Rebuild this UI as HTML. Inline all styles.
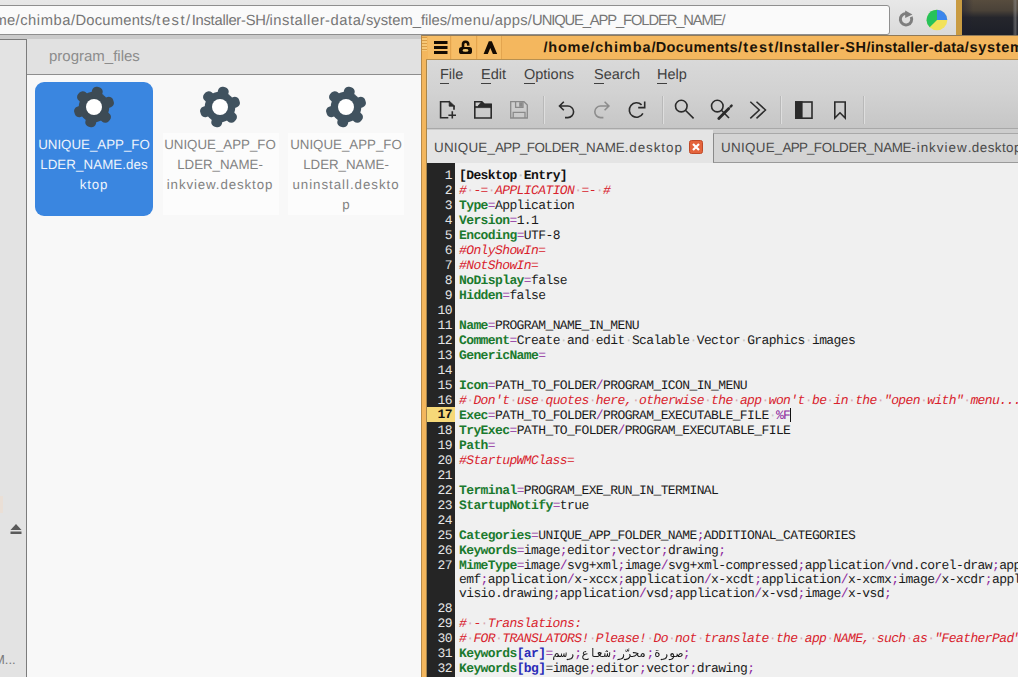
<!DOCTYPE html>
<html><head><meta charset="utf-8">
<style>
*{margin:0;padding:0;box-sizing:border-box}
html,body{text-rendering:geometricPrecision;width:1018px;height:677px;overflow:hidden;background:#e2e2e2;font-family:"Liberation Sans",sans-serif}
.a{position:absolute}
/* browser bar */
#bbar{left:0;top:0;width:956px;height:35px;background:linear-gradient(#e8e8e8,#dadada)}
#addr{left:-10px;top:5px;width:900px;height:30px;background:#fafafa;border:1px solid #8f8f8f;border-radius:3px}
.at{font-size:14.75px;color:#767676;white-space:nowrap;line-height:20px}
#obar{left:956px;top:0;width:6px;height:35px;background:#c99b42}
#photo{left:962px;top:0;width:56px;height:35px;background:linear-gradient(90deg,rgba(30,30,50,.5),rgba(0,0,0,0) 20%,rgba(0,0,0,0) 90%,rgba(150,150,150,.5) 95%,rgba(0,0,0,0)),linear-gradient(#574c3e,#4a4238 30%,#25262c 50%,#1c1f28)}
/* file manager */
#side{left:-1px;top:39px;width:28px;height:640px;background:#e3e3e3;border:1px solid #7c7c7c}
#fmtop{left:0;top:35px;width:421px;height:4px;background:#cbcbcb}
#fmhead{left:27px;top:39px;width:394px;height:36px;background:#e1e1e1;border-bottom:1px solid #8e8e8e}
#fmhtxt{left:49px;top:47px;font-size:15px;color:#8c8c8c;line-height:20px}
#fmcont{left:27px;top:75px;width:394px;height:602px;background:#f8f8f8}
.item{width:118px;height:134px;top:82px;border-radius:9px}
.lbl{font-size:13.3px;line-height:20px;text-align:center;width:118px;top:135px;color:#828282;white-space:nowrap}
.lbl span{display:block}
/* editor window */
#frame{left:421px;top:35px;width:597px;height:642px;background:#f3b65d;border-left:1px solid #b88a48}
#title{left:421px;top:35px;width:597px;height:25px;background:#f4b75e;border-top:1px solid #8f7a5a;border-left:1px solid #b88a48}
.ttx{font-size:14.5px;font-weight:bold;color:#1c1408;white-space:nowrap;line-height:20px}
#menubar{left:427px;top:60px;width:591px;height:30px;background:linear-gradient(#d9d9d9,#d2d2d2);border-left:1px solid #e4dccb}
.mi{top:65px;font-size:14.5px;color:#3f3f3f;line-height:20px}
.mi u{text-decoration:none;border-bottom:1px solid #3f3f3f}
#toolbar{left:427px;top:90px;width:591px;height:39px;background:linear-gradient(#d3d3d3,#c6c6c6);border-bottom:1px solid #a8a8a8}
#tabbar{left:427px;top:129px;width:591px;height:34px;background:#cdcdcd}
#tab1{left:427px;top:130px;width:286px;height:33px;background:#e4e4e4}
#tab2{left:713px;top:133px;width:305px;height:30px;background:#d4d4d4;border-left:1px solid #8a8a8a;border-top:1px solid #a8a8a8;border-bottom:1px solid #9a9a9a}
.tt{font-size:13.4px;color:#4a4a4a;line-height:20px;white-space:nowrap}
#gutter{left:427px;top:163px;width:28px;height:514px;background:#252525}
#code{left:455px;top:163px;width:563px;height:514px;background:#f0f0f0}
#lines{left:427px;top:167px;width:591px;height:510px;font-family:"Liberation Mono",monospace;font-size:13px;letter-spacing:-0.6px;white-space:pre;line-height:15px}
.ln{position:absolute;left:0;width:25px;height:15px;padding-top:1px;line-height:15px;text-align:right;color:#e4e4e4}
.cl{background:#f6d878;color:#111;font-weight:bold;width:28px;padding-right:3px;line-height:14px}
.cr{position:absolute;left:32px;color:#1a1a1a;height:15px;padding-top:1px}
.k{color:#1b7a2e;font-weight:bold}
.p{color:#8e2a9e}
.c{color:#d8222c;font-style:italic}
.h{color:#111;font-weight:bold}
.bl{color:#2a2ab8;font-weight:bold}
i.d{font-style:normal;color:#c4c4c4}
.c i.d{color:#d8a8b0}
.ar{}
.cur{display:inline-block;width:1px;height:14px;background:#111;vertical-align:-3px}
.tb{top:36px;height:23px;background:#f6bd66;border-right:1px solid #e3a54f}
#grip{left:422px;top:37px;width:5px;height:14px;background:repeating-linear-gradient(#d99c46 0 1px,#f6c878 1px 3px)}
</style></head><body>
<div class="a" id="bbar"></div>
<div class="a" id="addr"></div>
<div class="a at" style="right:1011.1px;top:11px">om</div>
<div class="a at" style="left:6.90px;top:11px;letter-spacing:0.517px;">e/chimba/</div>
<div class="a at" style="left:75.50px;top:11px;letter-spacing:0.210px;">Documents/</div>
<div class="a at" style="left:156.30px;top:11px;letter-spacing:1.506px;">test/</div>
<div class="a at" style="left:191.70px;top:11px;letter-spacing:-0.257px;">Installer-SH/</div>
<div class="a at" style="left:269.50px;top:11px;letter-spacing:0.530px;">installer-data/</div>
<div class="a at" style="left:366.00px;top:11px;letter-spacing:-0.003px;">system_files/</div>
<div class="a at" style="left:451.20px;top:11px;letter-spacing:0.521px;">menu/</div>
<div class="a at" style="left:494.80px;top:11px;letter-spacing:0.243px;">apps/</div>
<div class="a at" style="left:532.10px;top:11px;letter-spacing:-1.120px;">UNIQUE_APP_FOLDER_NAME/</div>
<svg class="a" style="left:896px;top:9px" width="20" height="20" viewBox="0 0 20 20"><path d="M10 4.5 A5.7 5.7 0 1 0 15.2 7.8" fill="none" stroke="#7e7e7e" stroke-width="3"/><path d="M9.2 1.6 L16.4 5.4 L9.2 8.9 Z" fill="#7e7e7e"/></svg>
<svg class="a" style="left:926px;top:9px" width="22" height="22" viewBox="0 0 22 22"><circle cx="11" cy="11" r="10.3" fill="#f2e25a"/><path d="M11 11 L11 0.7 A10.3 10.3 0 0 1 21.3 11 Z" fill="#3b86ec"/><path d="M11 11 L11 0.7 A10.3 10.3 0 0 0 3.7 18.3 Z" fill="#27c25a"/></svg>
<div class="a" id="obar"></div>
<div class="a" id="photo"></div>

<div class="a" id="fmtop"></div>
<div class="a" id="side"></div>
<svg class="a" style="left:10px;top:523px" width="12" height="12" viewBox="0 0 12 12"><path d="M6 1 L11.5 7 L0.5 7 Z" fill="#5a5a5a"/><rect x="0.5" y="8.5" width="11" height="2.5" fill="#5a5a5a"/></svg>
<div class="a" style="left:-6px;top:652px;font-size:13px;color:#7a7a7a;line-height:16px">M...</div>
<div class="a" style="left:0;top:496px;width:3px;height:17px;background:#eadfd6"></div>
<div class="a" id="fmhead"></div>
<div class="a" id="fmhtxt">program_files</div>
<div class="a" id="fmcont"></div>
<div class="a item" style="left:35px;background:#3a86e0"></div>
<div class="a" style="left:163px;top:133px;width:116px;height:82px;background:#fcfcfc"></div>
<div class="a" style="left:288px;top:133px;width:116px;height:82px;background:#fcfcfc"></div>
<svg width="0" height="0" style="position:absolute"><defs><g id="gear">
<circle cx="20" cy="20" r="15.3"/>
<rect x="14.6" y="-0.4" width="10.8" height="12" rx="4.4" transform="rotate(12 20 20)"/>
<rect x="14.6" y="-0.4" width="10.8" height="12" rx="4.4" transform="rotate(72 20 20)"/>
<rect x="14.6" y="-0.4" width="10.8" height="12" rx="4.4" transform="rotate(132 20 20)"/>
<rect x="14.6" y="-0.4" width="10.8" height="12" rx="4.4" transform="rotate(192 20 20)"/>
<rect x="14.6" y="-0.4" width="10.8" height="12" rx="4.4" transform="rotate(252 20 20)"/>
<rect x="14.6" y="-0.4" width="10.8" height="12" rx="4.4" transform="rotate(312 20 20)"/>
<circle cx="20" cy="20" r="8" fill="#fff"/>
</g></defs></svg>
<svg class="a" style="left:73px;top:86px" width="42" height="42" viewBox="-1 -1 42 42" fill="#3d4b55"><use href="#gear"/></svg>
<svg class="a" style="left:199px;top:86px" width="42" height="42" viewBox="-1 -1 42 42" fill="#40525f"><use href="#gear"/></svg>
<svg class="a" style="left:325px;top:86px" width="42" height="42" viewBox="-1 -1 42 42" fill="#40525f"><use href="#gear"/></svg>
<div class="a lbl" style="left:35px;color:#eef4fc"><span>UNIQUE_APP_FO</span><span style="letter-spacing:0.1px">LDER_NAME.des</span><span style="letter-spacing:0.9px">ktop</span></div>
<div class="a lbl" style="left:161px"><span>UNIQUE_APP_FO</span><span>LDER_NAME-</span><span style="letter-spacing:0.89px">inkview.desktop</span></div>
<div class="a lbl" style="left:287px"><span>UNIQUE_APP_FO</span><span>LDER_NAME-</span><span style="letter-spacing:0.96px">uninstall.deskto</span><span>p</span></div>

<div class="a" id="frame"></div>
<div class="a" id="title"></div>
<div class="a" id="grip"></div>
<div class="a tb" style="left:428px;width:23px"></div>
<div class="a tb" style="left:452px;width:25px"></div>
<div class="a tb" style="left:478px;width:24px"></div>
<svg class="a" style="left:433px;top:40px" width="16" height="16" viewBox="0 0 16 16" fill="#150c02"><rect x="1" y="1" width="13.5" height="3"/><rect x="1" y="6" width="13.5" height="3"/><rect x="1" y="11" width="13.5" height="3"/></svg>
<svg class="a" style="left:458px;top:40px" width="16" height="16" viewBox="0 0 16 16"><path d="M5 7.5 V4.6 A2.6 2.6 0 0 1 10.2 4.2 L10.4 5.6" fill="none" stroke="#150c02" stroke-width="2.6"/><rect x="1" y="7" width="13" height="7" rx="2.6" fill="#150c02"/><ellipse cx="7.5" cy="10.4" rx="3" ry="1.4" fill="#f3c870"/></svg>
<svg class="a" style="left:483px;top:40px" width="16" height="16" viewBox="0 0 16 16"><path d="M0.6 14 L5.8 1.2 L8.8 1.2 L14.2 14 L9.9 14 L7.3 8 L4.8 14 Z" fill="#150c02"/></svg>
<div class="a ttx" style="left:543.40px;top:38px;letter-spacing:0.820px;">/home</div>
<div class="a ttx" style="left:590.20px;top:38px;letter-spacing:0.915px;">/chimba</div>
<div class="a ttx" style="left:651.40px;top:38px;letter-spacing:0.361px;">/Documents</div>
<div class="a ttx" style="left:738.00px;top:38px;letter-spacing:1.337px;">/test</div>
<div class="a ttx" style="left:774.50px;top:38px;letter-spacing:0.569px;">/Installer-SH</div>
<div class="a ttx" style="left:866.50px;top:38px;letter-spacing:0.261px;">/installer-data</div>
<div class="a ttx" style="left:964.70px;top:38px;letter-spacing:0.711px;">/system_files/menu/apps/UNIQUE_APP_FOLDER_NAME</div>
<div class="a" style="left:426px;top:59px;width:1px;height:618px;background:#a8864c"></div>
<div class="a" style="left:426px;top:59px;width:592px;height:1px;background:#b89050"></div>
<div class="a" id="menubar"></div>
<div class="a mi" style="left:440px"><u>F</u>ile</div>
<div class="a mi" style="left:481px"><u>E</u>dit</div>
<div class="a mi" style="left:524px"><u>O</u>ptions</div>
<div class="a mi" style="left:594px"><u>S</u>earch</div>
<div class="a mi" style="left:657px"><u>H</u>elp</div>
<div class="a" id="toolbar"></div>
<svg class="a" style="left:427px;top:90px" width="591" height="39" viewBox="427 90 591 39" fill="none" stroke-width="1.6">
<g stroke="#2b2b2b">
<path d="M449.6 101.8 H440.6 V117.8 H448.3"/>
<path d="M449.2 101 L454.8 106.2 H449.2 Z" fill="#2b2b2b" stroke-width="0.8"/>
<path d="M454 105.8 V109.8" stroke-width="1.7"/>
<path d="M452.3 111.2 V118.6 M448.4 115.2 H456"/>
<path d="M474.8 118 V101.8 H481.8 L484.4 104.3 H491.2 V118 Z"/>
<path d="M474.8 106.6 H477.6 L481.6 101.8 L484.4 104.3 H491.2 V107.6 H474.8 Z" fill="#2b2b2b" stroke-width="0.8"/>
</g>
<g stroke="#8a8a8a" stroke-width="1.3">
<path d="M510.7 101.7 H524 L527.3 105 V118 H510.7 Z"/>
<path d="M515.6 101.7 V107.4 H523 V101.7"/>
<path d="M519.5 102.5 H522.3 V106.6 H519.5 Z" fill="#8a8a8a" stroke-width="0.6"/>
<path d="M513.2 118 V112.4 H525 V118"/>
</g>
<path d="M543.5 96 V124" stroke="#b9b9b9" stroke-width="1"/>
<path d="M544.5 96 V124" stroke="#dedede" stroke-width="1"/>
<path d="M563.8 101.8 L559.5 106 L563.8 110.3 M559.5 106 H567.8 A5.8 5.8 0 0 1 567.8 117.6 H565" stroke="#2b2b2b"/>
<path d="M604.6 101.8 L608.9 106 L604.6 110.3 M608.9 106 H600.6 A5.8 5.8 0 0 0 600.6 117.6 H603.4" stroke="#8c8c8c"/>
<g stroke="#2b2b2b">
<path d="M642.9 113.3 A7.2 7.2 0 1 1 641.6 104.9"/>
<path d="M644.7 101.4 V107.6 H638.2"/>
</g>
<path d="M662.5 96 V124" stroke="#b9b9b9" stroke-width="1"/>
<path d="M663.5 96 V124" stroke="#dedede" stroke-width="1"/>
<g stroke="#2b2b2b">
<circle cx="681.3" cy="106.1" r="5.8"/>
<path d="M685.4 110.3 L693.6 118.4"/>
<circle cx="717.3" cy="106.1" r="5.8"/>
<path d="M721.4 110.3 L729 118"/>
<path d="M718.8 118.6 L728.8 108.4" stroke-width="2.8" stroke-linecap="round"/>
<path d="M730.6 106.6 L731.6 105.6" stroke-width="2.4" stroke-linecap="round"/>
<path d="M750.3 101.7 L759.3 110 L750.3 118.4 M756.5 101.7 L765.5 110 L756.5 118.4" stroke-width="1.5"/>
</g>
<path d="M780.5 96 V124" stroke="#b9b9b9" stroke-width="1"/>
<path d="M781.5 96 V124" stroke="#dedede" stroke-width="1"/>
<g stroke="#2b2b2b">
<rect x="795.8" y="102" width="16.2" height="16.2"/>
<rect x="795.8" y="102" width="6" height="16.2" fill="#2b2b2b"/>
<path d="M834.8 102 H845.2 V118 L840 112.8 L834.8 118 Z"/>
</g>
<path d="M863.5 96 V124" stroke="#b9b9b9" stroke-width="1"/>
<path d="M864.5 96 V124" stroke="#dedede" stroke-width="1"/>
</svg>
<div class="a" id="tabbar"></div>
<div class="a" id="tab1"></div>
<div class="a tt" style="left:434.10px;top:138px;letter-spacing:0.211px;">UNIQUE_</div>
<div class="a tt" style="left:495.10px;top:138px;letter-spacing:-0.660px;">APP_</div>
<div class="a tt" style="left:526.70px;top:138px;letter-spacing:-0.337px;">FOLDER_</div>
<div class="a tt" style="left:586.10px;top:138px;letter-spacing:-0.022px;">NAME</div>
<div class="a tt" style="left:624.70px;top:138px;letter-spacing:0.932px;">.desktop</div>
<svg class="a" style="left:689px;top:140px" width="14" height="14" viewBox="0 0 14 14"><rect x="0.5" y="0.5" width="13" height="13" rx="2" fill="#e4643c" stroke="#c04a28"/><path d="M4 4 L10 10 M10 4 L4 10" stroke="#fff" stroke-width="2.2"/></svg>
<div class="a" id="tab2"></div>
<div class="a tt" style="left:721.10px;top:138px;letter-spacing:0.282px;">UNIQUE_</div>
<div class="a tt" style="left:782.60px;top:138px;letter-spacing:-0.760px;">APP_</div>
<div class="a tt" style="left:813.80px;top:138px;letter-spacing:-0.252px;">FOLDER_</div>
<div class="a tt" style="left:873.80px;top:138px;letter-spacing:-0.322px;">NAME</div>
<div class="a tt" style="left:911.20px;top:138px;letter-spacing:1.017px;">-inkview</div>
<div class="a tt" style="left:967.70px;top:138px;letter-spacing:0.447px;">.desktop</div>
<div class="a" id="gutter"></div>
<div class="a" id="code"></div>
<div class="a" id="lines">
<div class="ln" style="top:0px">1</div>
<div class="cr" style="top:0px"><span class="h">[Desktop<i class="d">·</i>Entry]</span></div>
<div class="ln" style="top:15px">2</div>
<div class="cr" style="top:15px"><span class="c">#<i class="d">·</i>-=<i class="d">·</i>APPLICATION<i class="d">·</i>=-<i class="d">·</i>#</span></div>
<div class="ln" style="top:30px">3</div>
<div class="cr" style="top:30px"><span class="k">Type</span><span class="p">=</span>Application</div>
<div class="ln" style="top:45px">4</div>
<div class="cr" style="top:45px"><span class="k">Version</span><span class="p">=</span>1.1</div>
<div class="ln" style="top:60px">5</div>
<div class="cr" style="top:60px"><span class="k">Encoding</span><span class="p">=</span>UTF-8</div>
<div class="ln" style="top:75px">6</div>
<div class="cr" style="top:75px"><span class="c">#OnlyShowIn=</span></div>
<div class="ln" style="top:90px">7</div>
<div class="cr" style="top:90px"><span class="c">#NotShowIn=</span></div>
<div class="ln" style="top:105px">8</div>
<div class="cr" style="top:105px"><span class="k">NoDisplay</span><span class="p">=</span>false</div>
<div class="ln" style="top:120px">9</div>
<div class="cr" style="top:120px"><span class="k">Hidden</span><span class="p">=</span>false</div>
<div class="ln" style="top:135px">10</div>
<div class="ln" style="top:150px">11</div>
<div class="cr" style="top:150px"><span class="k">Name</span><span class="p">=</span>PROGRAM_NAME_IN_MENU</div>
<div class="ln" style="top:165px">12</div>
<div class="cr" style="top:165px"><span class="k">Comment</span><span class="p">=</span>Create<i class="d">·</i>and<i class="d">·</i>edit<i class="d">·</i>Scalable<i class="d">·</i>Vector<i class="d">·</i>Graphics<i class="d">·</i>images</div>
<div class="ln" style="top:180px">13</div>
<div class="cr" style="top:180px"><span class="k">GenericName</span><span class="p">=</span></div>
<div class="ln" style="top:195px">14</div>
<div class="ln" style="top:210px">15</div>
<div class="cr" style="top:210px"><span class="k">Icon</span><span class="p">=</span>PATH_TO_FOLDER<span class="p">/</span>PROGRAM_ICON_IN_MENU</div>
<div class="ln" style="top:225px">16</div>
<div class="cr" style="top:225px"><span class="c">#<i class="d">·</i>Don't<i class="d">·</i>use<i class="d">·</i>quotes<i class="d">·</i>here,<i class="d">·</i>otherwise<i class="d">·</i>the<i class="d">·</i>app<i class="d">·</i>won't<i class="d">·</i>be<i class="d">·</i>in<i class="d">·</i>the<i class="d">·</i>"open<i class="d">·</i>with"<i class="d">·</i>menu...</span></div>
<div class="ln cl" style="top:240px">17</div>
<div class="cr" style="top:240px"><span class="k">Exec</span><span class="p">=</span>PATH_TO_FOLDER<span class="p">/</span>PROGRAM_EXECUTABLE_FILE<i class="d">·</i><span class="p">%F</span><span class="cur"></span></div>
<div class="ln" style="top:255px">18</div>
<div class="cr" style="top:255px"><span class="k">TryExec</span><span class="p">=</span>PATH_TO_FOLDER<span class="p">/</span>PROGRAM_EXECUTABLE_FILE</div>
<div class="ln" style="top:270px">19</div>
<div class="cr" style="top:270px"><span class="k">Path</span><span class="p">=</span></div>
<div class="ln" style="top:285px">20</div>
<div class="cr" style="top:285px"><span class="c">#StartupWMClass=</span></div>
<div class="ln" style="top:300px">21</div>
<div class="ln" style="top:315px">22</div>
<div class="cr" style="top:315px"><span class="k">Terminal</span><span class="p">=</span>PROGRAM_EXE_RUN_IN_TERMINAL</div>
<div class="ln" style="top:330px">23</div>
<div class="cr" style="top:330px"><span class="k">StartupNotify</span><span class="p">=</span>true</div>
<div class="ln" style="top:345px">24</div>
<div class="ln" style="top:360px">25</div>
<div class="cr" style="top:360px"><span class="k">Categories</span><span class="p">=</span>UNIQUE_APP_FOLDER_NAME<span class="p">;</span>ADDITIONAL_CATEGORIES</div>
<div class="ln" style="top:375px">26</div>
<div class="cr" style="top:375px"><span class="k">Keywords</span><span class="p">=</span>image<span class="p">;</span>editor<span class="p">;</span>vector<span class="p">;</span>drawing<span class="p">;</span></div>
<div class="ln" style="top:390px">27</div>
<div class="cr" style="top:390px"><span class="k">MimeType</span><span class="p">=</span>image<span class="p">/</span>svg+xml<span class="p">;</span>image<span class="p">/</span>svg+xml-compressed<span class="p">;</span>application<span class="p">/</span>vnd.corel-draw<span class="p">;</span>application<span class="p">/</span>pdf<span class="p">;</span>image<span class="p">/</span>x-</div>
<div class="cr" style="top:404px">emf<span class="p">;</span>application<span class="p">/</span>x-xccx<span class="p">;</span>application<span class="p">/</span>x-xcdt<span class="p">;</span>application<span class="p">/</span>x-xcmx<span class="p">;</span>image<span class="p">/</span>x-xcdr<span class="p">;</span>application<span class="p">/</span>vnd.</div>
<div class="cr" style="top:418px">visio.drawing<span class="p">;</span>application<span class="p">/</span>vsd<span class="p">;</span>application<span class="p">/</span>x-vsd<span class="p">;</span>image<span class="p">/</span>x-vsd<span class="p">;</span></div>
<div class="ln" style="top:433px">28</div>
<div class="ln" style="top:448px">29</div>
<div class="cr" style="top:448px"><span class="c">#<i class="d">·</i>-<i class="d">·</i>Translations:</span></div>
<div class="ln" style="top:463px">30</div>
<div class="cr" style="top:463px"><span class="c">#<i class="d">·</i>FOR<i class="d">·</i>TRANSLATORS!<i class="d">·</i>Please!<i class="d">·</i>Do<i class="d">·</i>not<i class="d">·</i>translate<i class="d">·</i>the<i class="d">·</i>app<i class="d">·</i>NAME,<i class="d">·</i>such<i class="d">·</i>as<i class="d">·</i>"FeatherPad"...</span></div>
<div class="ln" style="top:478px">31</div>
<div class="cr" style="top:478px"><span class="k">Keywords</span><span class="bl">[ar]</span><span class="p">=</span><span class="ar" style="padding-left:21.6875px"></span><span class="p">;</span><span class="ar" style="padding-left:28.90625px"></span><span class="p">;</span><span class="ar" style="padding-left:28.90625px"></span><span class="p">;</span><span class="ar" style="padding-left:28.90625px"></span><span class="p">;</span></div>
<div class="ln" style="top:493px">32</div>
<div class="cr" style="top:493px"><span class="k">Keywords</span><span class="bl">[bg]</span><span style="color:#333">=</span>image<span class="p">;</span>editor<span class="p">;</span>vector<span class="p">;</span>drawing<span class="p">;</span></div>
</div>
<svg class="a" style="left:548px;top:645px" width="142" height="21" viewBox="0 0 142 21" shape-rendering="crispEdges"><path fill="#1a1a1a" fill-opacity="0.143" d="M81 3h1v1h-1zM77 4h2v1h-2zM81 4h1v1h-1zM78 5h1v1h-1zM81 5h1v1h-1zM107 5h1v1h-1zM35 6h1v1h-1zM38 6h1v1h-1zM17 7h1v1h-1zM37 7h1v1h-1zM49 7h1v1h-1zM62 7h1v1h-1zM84 7h1v1h-1zM89 7h1v1h-1zM10 8h1v1h-1zM34 8h1v1h-1zM36 8h1v1h-1zM62 8h1v1h-1zM96 8h1v1h-1zM122 8h1v1h-1zM128 8h2v1h-2zM134 8h1v1h-1zM6 9h1v1h-1zM25 9h1v1h-1zM39 9h1v1h-1zM53 9h1v1h-1zM58 9h1v1h-1zM62 9h1v1h-1zM90 9h1v1h-1zM92 9h1v1h-1zM108 9h1v1h-1zM119 9h1v1h-1zM132 9h1v1h-1zM14 10h1v1h-1zM76 10h1v1h-1zM94 10h1v1h-1zM126 10h1v1h-1zM131 10h2v1h-2zM18 11h1v1h-1zM51 11h1v1h-1zM74 11h1v1h-1zM87 11h1v1h-1zM89 11h1v1h-1zM122 11h1v1h-1zM19 13h2v1h-2zM37 13h1v1h-1zM70 13h1v1h-1zM75 13h3v1h-3zM113 13h2v1h-2zM23 14h1v1h-1zM75 14h1v1h-1zM80 14h1v1h-1zM117 14h1v1h-1zM19 15h1v1h-1zM69 15h1v1h-1zM76 15h2v1h-2zM113 15h1v1h-1zM121 15h1v1h-1z"/><path fill="#1a1a1a" fill-opacity="0.286" d="M45 3h1v1h-1zM80 3h1v1h-1zM45 4h1v1h-1zM45 5h1v1h-1zM59 5h1v1h-1zM110 5h1v1h-1zM45 6h1v1h-1zM77 6h1v1h-1zM79 6h1v1h-1zM18 7h1v1h-1zM36 7h1v1h-1zM45 7h1v1h-1zM53 7h1v1h-1zM107 7h1v1h-1zM110 7h1v1h-1zM7 8h1v1h-1zM15 8h3v1h-3zM37 8h1v1h-1zM39 8h1v1h-1zM45 8h1v1h-1zM49 8h1v1h-1zM57 8h1v1h-1zM85 8h2v1h-2zM93 8h1v1h-1zM109 8h1v1h-1zM111 8h1v1h-1zM125 8h1v1h-1zM8 9h1v1h-1zM45 9h1v1h-1zM82 9h1v1h-1zM87 9h1v1h-1zM94 9h1v1h-1zM128 9h1v1h-1zM130 9h1v1h-1zM11 10h2v1h-2zM34 10h1v1h-1zM36 10h1v1h-1zM60 10h1v1h-1zM85 10h1v1h-1zM88 10h1v1h-1zM108 10h1v1h-1zM5 11h1v1h-1zM25 11h1v1h-1zM44 11h1v1h-1zM96 11h1v1h-1zM107 11h1v1h-1zM119 11h1v1h-1zM6 12h1v1h-1zM35 12h1v1h-1zM124 12h1v1h-1zM6 13h1v1h-1zM24 13h1v1h-1zM36 13h1v1h-1zM39 13h1v1h-1zM71 13h1v1h-1zM81 13h1v1h-1zM118 13h1v1h-1zM125 13h1v1h-1zM6 14h1v1h-1zM18 14h1v1h-1zM73 14h1v1h-1zM112 14h1v1h-1zM120 14h1v1h-1zM124 14h1v1h-1z"/><path fill="#1a1a1a" fill-opacity="0.429" d="M80 4h1v1h-1zM77 5h1v1h-1zM57 6h1v1h-1zM80 6h1v1h-1zM88 7h1v1h-1zM13 8h1v1h-1zM51 8h1v1h-1zM56 8h1v1h-1zM87 8h1v1h-1zM90 8h1v1h-1zM108 8h1v1h-1zM131 8h1v1h-1zM16 9h2v1h-2zM38 9h1v1h-1zM57 9h1v1h-1zM6 10h1v1h-1zM18 10h1v1h-1zM25 10h1v1h-1zM45 10h1v1h-1zM58 10h1v1h-1zM90 10h1v1h-1zM92 10h1v1h-1zM111 10h1v1h-1zM119 10h1v1h-1zM134 10h1v1h-1zM35 11h1v1h-1zM59 11h1v1h-1zM129 11h1v1h-1zM133 11h1v1h-1zM80 12h1v1h-1zM21 13h1v1h-1zM34 13h1v1h-1zM40 13h1v1h-1zM72 13h1v1h-1zM78 13h1v1h-1zM115 13h1v1h-1zM123 13h1v1h-1zM22 14h1v1h-1zM35 14h1v1h-1zM40 14h1v1h-1zM116 14h1v1h-1z"/><path fill="#1a1a1a" fill-opacity="0.571" d="M79 4h1v1h-1zM58 5h1v1h-1zM109 5h1v1h-1zM36 6h1v1h-1zM58 6h1v1h-1zM61 7h1v1h-1zM18 8h1v1h-1zM38 8h1v1h-1zM53 8h1v1h-1zM9 9h2v1h-2zM15 9h1v1h-1zM18 9h1v1h-1zM24 9h1v1h-1zM56 9h1v1h-1zM96 9h1v1h-1zM110 9h2v1h-2zM118 9h1v1h-1zM122 9h1v1h-1zM124 9h1v1h-1zM133 9h2v1h-2zM9 10h1v1h-1zM17 10h1v1h-1zM50 10h1v1h-1zM57 10h1v1h-1zM81 10h1v1h-1zM86 10h1v1h-1zM95 10h1v1h-1zM122 10h2v1h-2zM128 10h1v1h-1zM7 11h1v1h-1zM13 11h1v1h-1zM15 11h1v1h-1zM52 11h1v1h-1zM61 11h1v1h-1zM86 11h1v1h-1zM93 11h1v1h-1zM110 11h1v1h-1zM23 12h1v1h-1zM117 12h1v1h-1zM69 14h1v1h-1zM72 14h1v1h-1zM79 14h1v1h-1z"/><path fill="#1a1a1a" fill-opacity="0.714" d="M44 3h1v1h-1zM44 4h1v1h-1zM44 5h1v1h-1zM80 5h1v1h-1zM108 5h1v1h-1zM44 6h1v1h-1zM78 6h1v1h-1zM44 7h1v1h-1zM50 7h1v1h-1zM52 7h1v1h-1zM87 7h1v1h-1zM109 7h1v1h-1zM9 8h1v1h-1zM44 8h1v1h-1zM59 8h1v1h-1zM88 8h1v1h-1zM95 8h1v1h-1zM107 8h1v1h-1zM123 8h1v1h-1zM133 8h1v1h-1zM35 9h1v1h-1zM37 9h1v1h-1zM44 9h1v1h-1zM50 9h1v1h-1zM75 9h1v1h-1zM81 9h1v1h-1zM95 9h1v1h-1zM129 9h1v1h-1zM16 10h1v1h-1zM24 10h1v1h-1zM44 10h1v1h-1zM52 10h1v1h-1zM82 10h1v1h-1zM96 10h1v1h-1zM107 10h1v1h-1zM110 10h1v1h-1zM118 10h1v1h-1zM6 11h1v1h-1zM34 11h1v1h-1zM50 11h1v1h-1zM56 11h2v1h-2zM81 11h1v1h-1zM85 11h1v1h-1zM92 11h1v1h-1zM123 11h1v1h-1zM5 12h1v1h-1zM34 12h1v1h-1zM74 12h2v1h-2zM22 13h1v1h-1zM79 13h1v1h-1zM116 13h1v1h-1zM21 14h1v1h-1zM36 14h1v1h-1zM115 14h1v1h-1zM123 14h1v1h-1z"/><path fill="#1a1a1a" fill-opacity="0.857" d="M79 5h1v1h-1zM37 6h1v1h-1zM59 6h1v1h-1zM35 7h1v1h-1zM86 7h1v1h-1zM108 7h1v1h-1zM8 8h1v1h-1zM35 8h1v1h-1zM61 8h1v1h-1zM94 8h1v1h-1zM124 8h1v1h-1zM132 8h1v1h-1zM7 9h1v1h-1zM13 9h1v1h-1zM51 9h2v1h-2zM61 9h1v1h-1zM88 9h2v1h-2zM93 9h1v1h-1zM107 9h1v1h-1zM123 9h1v1h-1zM125 9h1v1h-1zM131 9h1v1h-1zM7 10h1v1h-1zM15 10h1v1h-1zM35 10h1v1h-1zM56 10h1v1h-1zM61 10h1v1h-1zM75 10h1v1h-1zM87 10h1v1h-1zM89 10h1v1h-1zM93 10h1v1h-1zM125 10h1v1h-1zM133 10h1v1h-1zM8 11h1v1h-1zM10 11h1v1h-1zM16 11h2v1h-2zM24 11h1v1h-1zM45 11h1v1h-1zM53 11h1v1h-1zM55 11h1v1h-1zM58 11h1v1h-1zM82 11h1v1h-1zM90 11h2v1h-2zM94 11h1v1h-1zM108 11h1v1h-1zM118 11h1v1h-1zM127 11h2v1h-2zM132 11h1v1h-1zM24 12h1v1h-1zM118 12h1v1h-1zM125 12h1v1h-1zM5 13h1v1h-1zM23 13h1v1h-1zM35 13h1v1h-1zM73 13h2v1h-2zM117 13h1v1h-1zM5 14h1v1h-1zM20 14h1v1h-1zM37 14h1v1h-1zM71 14h1v1h-1zM78 14h1v1h-1zM114 14h1v1h-1z"/><path fill="#1a1a1a" fill-opacity="1.000" d="M51 7h1v1h-1zM85 7h1v1h-1zM50 8h1v1h-1zM52 8h1v1h-1zM89 8h1v1h-1zM110 8h1v1h-1zM36 9h1v1h-1zM59 9h1v1h-1zM10 10h1v1h-1zM13 10h1v1h-1zM51 10h1v1h-1zM59 10h1v1h-1zM129 10h2v1h-2zM9 11h1v1h-1zM11 11h2v1h-2zM14 11h1v1h-1zM46 11h4v1h-4zM54 11h1v1h-1zM60 11h1v1h-1zM75 11h1v1h-1zM83 11h2v1h-2zM95 11h1v1h-1zM109 11h1v1h-1zM124 11h3v1h-3zM130 11h2v1h-2zM81 12h1v1h-1zM80 13h1v1h-1zM124 13h1v1h-1zM19 14h1v1h-1zM38 14h2v1h-2zM70 14h1v1h-1zM76 14h2v1h-2zM113 14h1v1h-1zM121 14h2v1h-2z"/></svg>
</body></html>
